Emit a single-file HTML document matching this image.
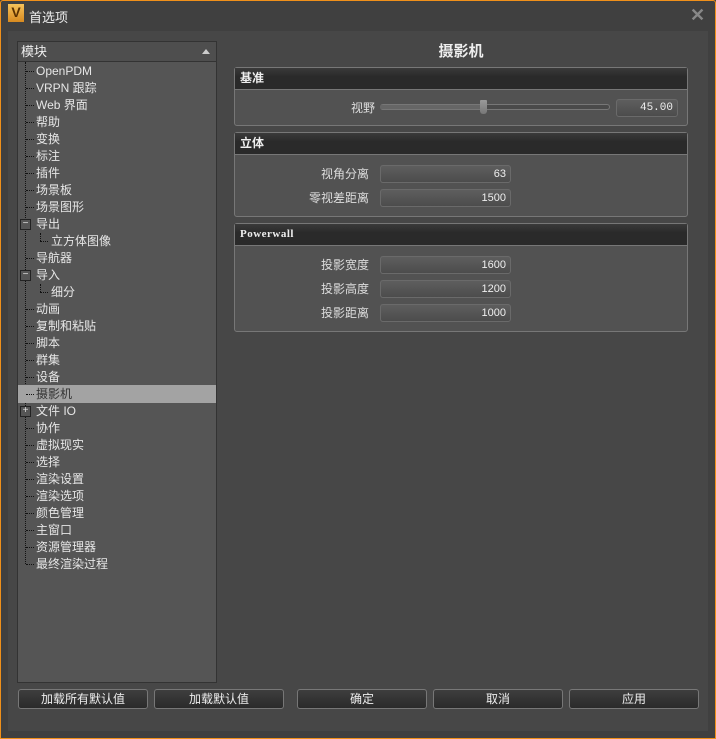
<!DOCTYPE html><html><head><meta charset="utf-8"><style>
*{box-sizing:border-box;margin:0;padding:0}
body{width:716px;height:739px;background:#404040;font-family:"Liberation Sans","Noto Sans CJK SC",sans-serif;font-size:12px;color:#ddd;position:relative;overflow:hidden}
.frame{position:absolute;left:0;top:0;width:716px;height:739px;border:1px solid #f0901a;border-radius:3px 3px 0 0}
.abs{position:absolute}
.panel{left:8px;top:31px;width:700px;height:700px;background:#474747}
.tree{left:17px;top:41px;width:200px;height:642px;background:#555;border:1px solid #333}
.th{left:0;top:0;width:198px;height:20px;background:#4e4e4e;border-bottom:1px solid #333;padding:0 0 0 3px;line-height:19px;font-size:13px;color:#eee}
.it{position:absolute;left:18px;height:17px;line-height:17px;font-size:12px;color:#e6e6e6;white-space:nowrap}
.vl{position:absolute;left:7px;top:20px;width:0;height:502px;border-left:1px dotted #111}
.hl{position:absolute;width:8px;border-top:1px dotted #111}
.box{position:absolute;width:11px;height:11px;border:1px solid #222;background:#555;left:2px;font-size:10px;line-height:8px;text-align:center;color:#ddd}
.grp{position:absolute;left:234px;width:454px;border:1px solid #777;border-radius:3px;background:#525252}
.gh{height:22px;background:linear-gradient(#3a3a3a,#2a2a2a 40%,#2a2a2a);border-bottom:1px solid #777;font-weight:bold;font-size:12px;color:#eee;padding:0 0 0 5px;line-height:21px}
.lbl{position:absolute;left:0;text-align:right;width:134px;font-size:12px;color:#ddd;line-height:18px}
.fld{position:absolute;left:145px;width:131px;height:18px;border:1px solid #6a6a6a;border-radius:3px;background:linear-gradient(#5e5e5e,#4c4c4c);text-align:right;padding:0 4px 0 0;line-height:16px;font-size:11px;color:#eee}
.btn{position:absolute;top:689px;width:130px;height:20px;border:1px solid #777;border-radius:3px;background:linear-gradient(#3e3e3e,#2a2a2a);text-align:center;line-height:18px;color:#eee;font-size:12px}
</style></head><body>
<div class="frame"></div>
<div class="abs" style="left:8px;top:4px;width:16px;height:18px;background:linear-gradient(#f6c25a,#d78a20);color:#5a3000;font-weight:bold;font-size:14px;text-align:center;line-height:16px">V</div>
<div class="abs" style="left:29px;top:7px;font-size:13px;color:#eee">首选项</div>
<div class="abs" style="left:690px;top:7px;font-size:18px;color:#888;font-weight:bold;line-height:16px">✕</div>
<div class="abs panel"></div>
<div class="abs tree">
<div class="abs th">模块<span style="position:absolute;right:6px;top:7px;width:0;height:0;border-left:4px solid transparent;border-right:4px solid transparent;border-bottom:5px solid #ccc"></span></div>
<div class="vl"></div>
<div class="abs" style="left:0;top:343px;width:198px;height:18px;background:#a3a3a3"></div>
<div style="position:absolute;left:0;top:20px;width:198px">
<div class="hl" style="left:8px;top:9px"></div><div class="it" style="top:1px">OpenPDM</div>
<div class="hl" style="left:8px;top:26px"></div><div class="it" style="top:18px">VRPN 跟踪</div>
<div class="hl" style="left:8px;top:43px"></div><div class="it" style="top:35px">Web 界面</div>
<div class="hl" style="left:8px;top:60px"></div><div class="it" style="top:52px">帮助</div>
<div class="hl" style="left:8px;top:77px"></div><div class="it" style="top:69px">变换</div>
<div class="hl" style="left:8px;top:94px"></div><div class="it" style="top:86px">标注</div>
<div class="hl" style="left:8px;top:111px"></div><div class="it" style="top:103px">插件</div>
<div class="hl" style="left:8px;top:128px"></div><div class="it" style="top:120px">场景板</div>
<div class="hl" style="left:8px;top:145px"></div><div class="it" style="top:137px">场景图形</div>
<div class="box" style="top:157px">−</div><div class="it" style="top:154px">导出</div>
<div style="position:absolute;left:22px;top:171px;height:8px;border-left:1px dotted #111"></div><div class="hl" style="left:22px;top:179px"></div><div class="it" style="top:171px;left:33px">立方体图像</div>
<div class="hl" style="left:8px;top:196px"></div><div class="it" style="top:188px">导航器</div>
<div class="box" style="top:208px">−</div><div class="it" style="top:205px">导入</div>
<div style="position:absolute;left:22px;top:222px;height:8px;border-left:1px dotted #111"></div><div class="hl" style="left:22px;top:230px"></div><div class="it" style="top:222px;left:33px">细分</div>
<div class="hl" style="left:8px;top:247px"></div><div class="it" style="top:239px">动画</div>
<div class="hl" style="left:8px;top:264px"></div><div class="it" style="top:256px">复制和粘贴</div>
<div class="hl" style="left:8px;top:281px"></div><div class="it" style="top:273px">脚本</div>
<div class="hl" style="left:8px;top:298px"></div><div class="it" style="top:290px">群集</div>
<div class="hl" style="left:8px;top:315px"></div><div class="it" style="top:307px">设备</div>
<div class="hl" style="left:8px;top:332px"></div><div class="it" style="top:324px;color:#333">摄影机</div>
<div class="box" style="top:344px">+</div><div class="it" style="top:341px">文件 IO</div>
<div class="hl" style="left:8px;top:366px"></div><div class="it" style="top:358px">协作</div>
<div class="hl" style="left:8px;top:383px"></div><div class="it" style="top:375px">虚拟现实</div>
<div class="hl" style="left:8px;top:400px"></div><div class="it" style="top:392px">选择</div>
<div class="hl" style="left:8px;top:417px"></div><div class="it" style="top:409px">渲染设置</div>
<div class="hl" style="left:8px;top:434px"></div><div class="it" style="top:426px">渲染选项</div>
<div class="hl" style="left:8px;top:451px"></div><div class="it" style="top:443px">颜色管理</div>
<div class="hl" style="left:8px;top:468px"></div><div class="it" style="top:460px">主窗口</div>
<div class="hl" style="left:8px;top:485px"></div><div class="it" style="top:477px">资源管理器</div>
<div class="hl" style="left:8px;top:502px"></div><div class="it" style="top:494px">最终渲染过程</div>
</div></div>
<div class="abs" style="left:234px;top:40px;width:454px;text-align:center;font-size:15px;font-weight:bold;color:#eee">摄影机</div>
<div class="grp" style="top:67px;height:59px"><div class="gh">基准</div>
<div class="lbl" style="width:140px;top:31px">视野</div>
<div class="abs" style="left:145px;top:36px;width:230px;height:6px;border:1px solid #777;border-radius:3px;background:#4a4a4a"></div>
<div class="abs" style="left:145px;top:37px;width:102px;height:4px;background:#666;border-radius:2px"></div>
<div class="abs" style="left:245px;top:32px;width:7px;height:14px;background:linear-gradient(#999,#777);border-radius:1px 1px 3px 3px"></div>
<div class="fld" style="left:381px;width:62px;top:31px;font-family:'Liberation Mono',monospace">45.00</div></div>
<div class="grp" style="top:132px;height:85px"><div class="gh">立体</div>
<div class="lbl" style="top:32px">视角分离</div><div class="fld" style="top:32px">63</div>
<div class="lbl" style="top:56px">零视差距离</div><div class="fld" style="top:56px">1500</div></div>
<div class="grp" style="top:223px;height:109px"><div class="gh" style="font-family:'Liberation Serif',serif;font-size:11px;letter-spacing:0.5px">Powerwall</div>
<div class="lbl" style="top:32px">投影宽度</div><div class="fld" style="top:32px">1600</div>
<div class="lbl" style="top:56px">投影高度</div><div class="fld" style="top:56px">1200</div>
<div class="lbl" style="top:80px">投影距离</div><div class="fld" style="top:80px">1000</div></div>
<div class="btn" style="left:18px">加载所有默认值</div>
<div class="btn" style="left:154px">加载默认值</div>
<div class="btn" style="left:297px">确定</div>
<div class="btn" style="left:433px">取消</div>
<div class="btn" style="left:569px">应用</div>
</body></html>
